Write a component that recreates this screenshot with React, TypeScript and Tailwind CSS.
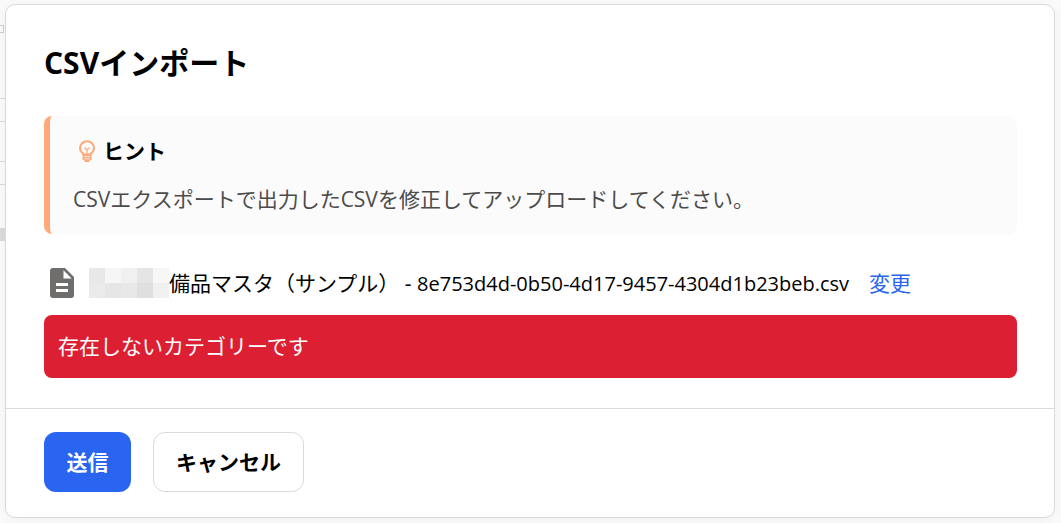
import React from "react";

function BulbIcon() {
  return (
    <svg viewBox="0 0 18 24" className="h-6 w-[18px] shrink-0" fill="none" stroke="#ffa97a" aria-hidden="true">
      <path d="M5.5 15.5V14.8C3.4 13.5 2 11.5 2 9.2a7 7 0 0 1 14 0c0 2.3-1.4 4.3-3.5 5.6v.7Z" strokeWidth="2" />
      <path d="M6.5 8.500 9 11l2.500-2.500M9 11v4" strokeWidth="1.3" />
      <path d="M4.5 15.500h9v5.500H12L11 23H7L6 21H4.500Z" fill="#ffa97a" stroke="none" />
      <path d="M6 17.5h6M6.5 19.800h5" stroke="#fbfbfb" strokeWidth=".8" />
    </svg>
  );
}

function FileIcon() {
  return (
    <svg viewBox="0 0 24 30" className="h-[30px] w-6 shrink-0" aria-hidden="true">
      <path d="M3 0h12l9 9v18a3 3 0 0 1-3 3H3a3 3 0 0 1-3-3V3a3 3 0 0 1 3-3Z" fill="#6f6e6c" />
      <path d="M13.5 2.3V10.5H21.7Z" fill="#fff" />
      <path d="M6 16.5h12M6 22.5h12" stroke="#fff" strokeWidth="3" />
    </svg>
  );
}

const maskTiles = [
  "bg-[#e8e8e8]", "bg-[#f6f6f6]", "bg-[#f0f0f0]", "bg-[#e5e5e5]", "bg-[#f7f7f7]",
  "bg-[#ebebeb]", "bg-[#e6e6e6]", "bg-[#e8e8e8]", "bg-[#dfdfdf]", "bg-[#f0f0f0]",
];

function PageEdge() {
  return (
    <div className="flex w-[5px] shrink-0 flex-col overflow-hidden" aria-hidden="true">
      <div className="mt-[25px] h-2 w-1 border border-l-0 border-[#d5cdc4]" />
      <div className="mt-[65px] h-6 border-y border-[#d8d8d8]" />
      <div className="mt-[39px] h-6 border-y border-[#d8d8d8]" />
      <div className="mt-[43px] h-[13px] bg-[#dadada]" />
    </div>
  );
}

export default function App() {
  return (
    <div className="flex min-h-screen bg-[#fafafa] pr-1.5 font-['Open_Sans','Noto_Sans_CJK_JP',sans-serif] text-[21px] leading-8 text-black">
      <PageEdge />
      <form
        role="dialog"
        aria-labelledby="import-title"
        onSubmit={(e) => e.preventDefault()}
        className="mt-1 mb-[5px] flex min-w-0 flex-1 flex-col rounded-[10px] border border-[#d9dada] bg-white shadow-[0_2px_12px_rgba(0,0,0,0.04)]"
      >
        <div className="pt-9 pr-[37px] pb-[30px] pl-[38px]">
          <h1 id="import-title" className="text-[30px] leading-11 font-bold">CSVインポート</h1>

          <section className="mt-[31px] rounded-lg border-l-6 border-[#ffa97a] bg-[#fbfbfb] px-[23px] py-[19px]">
            <h2 className="flex items-center gap-[7px] pl-[5px] font-bold">
              <BulbIcon />
              ヒント
            </h2>
            <p className="mt-4 text-[#4b4b4b]">CSVエクスポートで出力したCSVを修正してアップロードしてください。</p>
          </section>

          <div className="mt-8 flex items-center pt-px pl-1.5">
            <FileIcon />
            <span className="ml-[15px] grid shrink-0 grid-cols-5" aria-hidden="true">
              {maskTiles.map((tone, i) => (
                <span key={i} className={`h-[15px] w-4 ${tone}`} />
              ))}
            </span>
            <span>
              備品マスタ（サンプル） - <span className="text-xl">8e753d4d-0b50-4d17-9457-4304d1b23beb.csv</span>
            </span>
            <button type="button" className="ml-5 shrink-0 text-[#2a65f1]">変更</button>
          </div>

          <p role="alert" className="mt-4 rounded-lg bg-[#dc1f32] px-3.5 pt-[15px] pb-4 leading-8 text-white">
            存在しないカテゴリーです
          </p>
        </div>

        <div className="flex gap-[22px] border-t border-[#d9dada] px-[38px] pt-[23px] pb-[25px] font-bold">
          <button type="submit" className="h-[60px] min-w-[87px] rounded-xl bg-[#2a65f1] px-[22px] font-bold text-white">送信</button>
          <button type="button" className="h-[60px] rounded-xl border border-[#d9dada] bg-white px-[22px] font-bold">キャンセル</button>
        </div>
      </form>
    </div>
  );
}
